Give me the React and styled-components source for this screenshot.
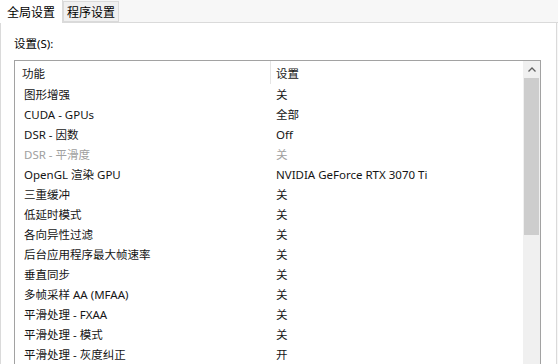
import { createGlobalStyle } from 'styled-components'
import styled from 'styled-components'

const GlobalStyle = createGlobalStyle`
  html, body {
    margin: 0;
    padding: 0;
    background: #ffffff;
  }
  body {
    font-family: "Noto Sans", "Open Sans", "Noto Sans CJK SC", sans-serif;
    font-size: 11.5px;
    color: #000;
  }
`

const Window = styled.div`
  width: 558px;
  height: 364px;
  overflow: hidden;
  background: #f7f7f7;
  display: flex;
  flex-direction: column;
`

const TabStrip = styled.div`
  display: flex;
  align-items: flex-end;
  height: 23px;
  border-bottom: 1px solid #dadada;
  box-sizing: border-box;
`

const Tab = styled.div`
  box-sizing: border-box;
  height: ${(p) => (p.$active ? '24px' : '21px')};
  margin-bottom: ${(p) => (p.$active ? '-1px' : '0')};
  padding: ${(p) => (p.$active ? '0 7px' : '0 3px')};
  background: ${(p) => (p.$active ? '#ffffff' : '#f0f0f0')};
  border: 1px solid #dadada;
  border-bottom: ${(p) => (p.$active ? 'none' : '1px solid #dadada')};
  border-left: ${(p) => (p.$active ? 'none' : '1px solid #dadada')};
  display: flex;
  align-items: center;
  font-family: "Noto Sans CJK SC", sans-serif;
  font-size: 12px;
  line-height: 1;
`

const Panel = styled.div`
  flex: 1;
  background: #ffffff;
  border-left: 1px solid #dadada;
  border-right: 1px solid #dadada;
  margin-right: 1px;
  padding: 13px 0 0 13px;
  display: flex;
  flex-direction: column;
`

const Label = styled.div`
  height: 16px;
  line-height: 16px;
  margin-bottom: 8px;
`

const ListBox = styled.div`
  width: 527px;
  flex: 1;
  border: 1px solid #a2a2a2;
  border-bottom: none;
  display: flex;
  box-sizing: border-box;
`

const Rows = styled.div`
  flex: 1;
  display: flex;
  flex-direction: column;
`

const Row = styled.div`
  display: grid;
  grid-template-columns: 255px 1fr;
  height: ${(p) => (p.$header ? '23px' : '20px')};
  align-items: center;
  color: ${(p) => (p.$disabled ? '#a0a0a0' : '#151515')};
  flex-shrink: 0;
`

const Cell = styled.div`
  padding-left: ${(p) => (p.$divider ? '5px' : '9px')};
  height: 100%;
  display: flex;
  align-items: center;
  border-left: ${(p) => (p.$divider ? '1px solid #e5e5e5' : 'none')};
  white-space: nowrap;
`

const ScrollBar = styled.div`
  width: 17px;
  background: #f0f0f0;
  display: flex;
  flex-direction: column;
`

const ArrowButton = styled.div`
  height: 17px;
  display: flex;
  align-items: center;
  justify-content: center;
`

const Thumb = styled.div`
  height: 157px;
  margin: 0 1px;
  background: #cdcdcd;
`

const rows = [
  ['图形增强', '关'],
  ['CUDA - GPUs', '全部'],
  ['DSR - 因数', 'Off'],
  ['DSR - 平滑度', '关', true],
  ['OpenGL 渲染 GPU', 'NVIDIA GeForce RTX 3070 Ti'],
  ['三重缓冲', '关'],
  ['低延时模式', '关'],
  ['各向异性过滤', '关'],
  ['后台应用程序最大帧速率', '关'],
  ['垂直同步', '关'],
  ['多帧采样 AA (MFAA)', '关'],
  ['平滑处理 - FXAA', '关'],
  ['平滑处理 - 模式', '关'],
  ['平滑处理 - 灰度纠正', '开'],
]

export default function App() {
  return (
    <>
      <GlobalStyle />
      <Window>
        <TabStrip>
          <Tab $active>全局设置</Tab>
          <Tab>程序设置</Tab>
        </TabStrip>
        <Panel>
          <Label>设置(S):</Label>
          <ListBox>
            <Rows>
              <Row $header>
                <Cell style={{ paddingLeft: 7 }}>功能</Cell>
                <Cell $divider>设置</Cell>
              </Row>
              {rows.map(([name, value, disabled]) => (
                <Row key={name} $disabled={disabled}>
                  <Cell>{name}</Cell>
                  <Cell style={{ paddingLeft: 6 }}>{value}</Cell>
                </Row>
              ))}
            </Rows>
            <ScrollBar>
              <ArrowButton>
                <svg width="8" height="5" viewBox="0 0 8 5">
                  <path d="M0.5 4.5 L4 1 L7.5 4.5" fill="none" stroke="#606060" strokeWidth="1.3" />
                </svg>
              </ArrowButton>
              <Thumb />
            </ScrollBar>
          </ListBox>
        </Panel>
      </Window>
    </>
  )
}
